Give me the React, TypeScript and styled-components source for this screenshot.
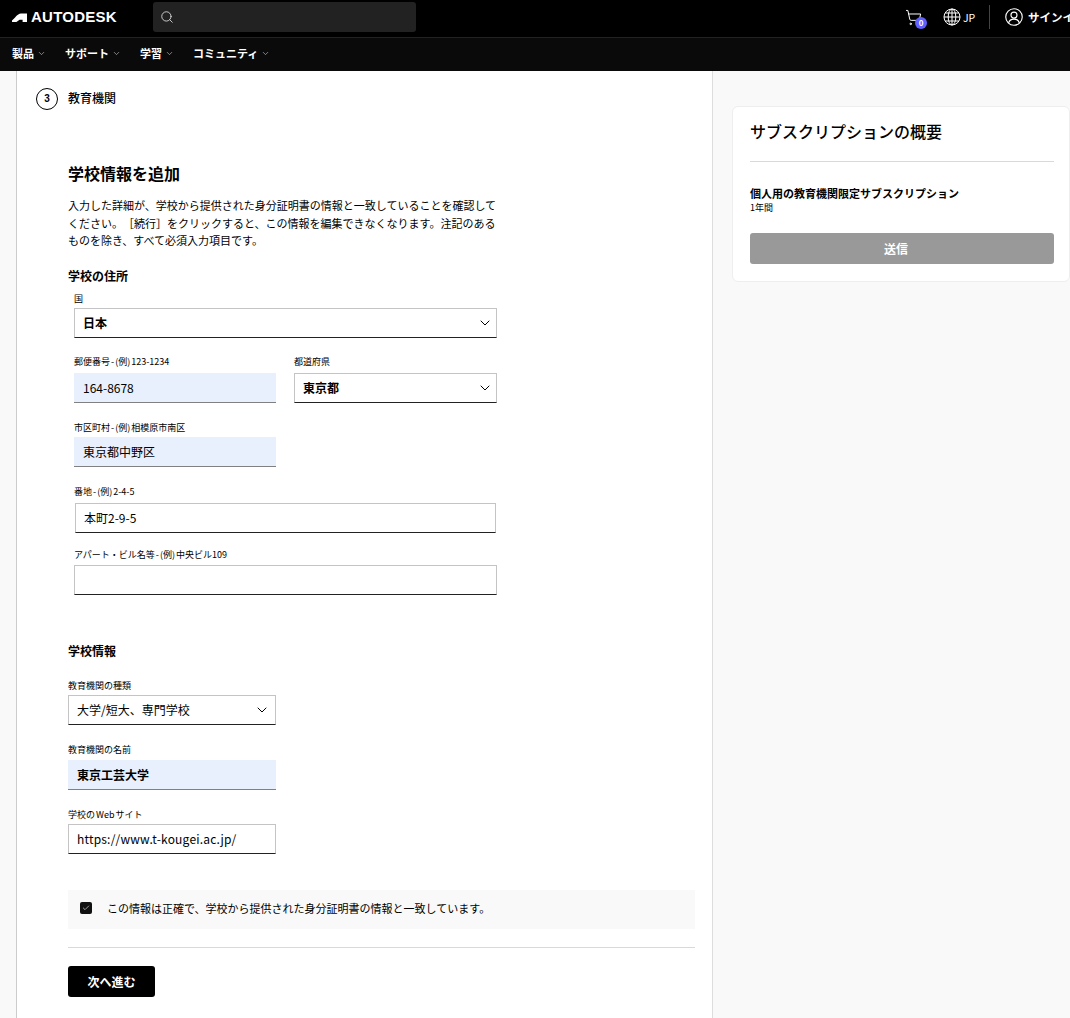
import { ShoppingCart, Search, ChevronDown, Check } from "lucide-react";
import styled, { createGlobalStyle } from "styled-components";

const GlobalStyle = createGlobalStyle`
    html, body {
        margin: 0;
        padding: 0;
        background: #f9f9f9;
        overflow: hidden;
    }
    body {
        font-family: "Noto Sans CJK JP", "Noto Sans", sans-serif;
        color: #000;
        text-spacing-trim: space-all;
    }
    * {
        box-sizing: border-box;
    }
`;

const Page = styled.div`
    width: 1070px;
    height: 1018px;
    overflow: hidden;
`;

const TopBar = styled.header`
    height: 38px;
    background: #000;
    border-bottom: 1px solid #222;
    display: flex;
    align-items: center;
    padding-left: 12px;
`;
const Logo = styled.div`
    width: 141px;
    margin-bottom: 3px;
    display: flex;
    align-items: center;
    gap: 4px;
    color: #fff;
    font-family: "Liberation Sans", sans-serif;
    font-weight: 700;
    font-size: 15px;
    line-height: 18px;
    letter-spacing: 0.25px;
`;
const SearchBox = styled.div`
    width: 263px;
    height: 30px;
    margin-bottom: 3px;
    background: #222;
    border-radius: 3px;
    display: flex;
    align-items: center;
    padding-left: 7px;
    color: #ddd;
`;
const TopRight = styled.div`
    width: 165px;
    margin-left: auto;
    margin-bottom: 3px;
    display: flex;
    align-items: center;
    color: #fff;
    white-space: nowrap;
    overflow: hidden;
`;
const Cart = styled.div`
    position: relative;
    flex-shrink: 0;
    width: 38px;
    height: 24px;
    display: flex;
    align-items: center;
`;
const Badge = styled.span`
    position: absolute;
    left: 10px;
    top: 12px;
    width: 12px;
    height: 12px;
    border-radius: 50%;
    background: #5f60ff;
    font-size: 8px;
    line-height: 12px;
    font-weight: 700;
    text-align: center;
`;
const Locale = styled.div`
    flex-shrink: 0;
    display: flex;
    align-items: center;
    gap: 2px;
    font-size: 10.5px;
    width: 46px;
`;
const Divider = styled.div`
    flex-shrink: 0;
    width: 1px;
    height: 24px;
    background: #444;
    margin-right: 15px;
`;
const SignIn = styled.div`
    flex-shrink: 0;
    display: flex;
    align-items: center;
    gap: 5px;
    font-size: 11.5px;
    font-weight: 700;
`;

const NavBar = styled.nav`
    height: 33px;
    padding: 0 0 3px 12px;
    background: #0a0a0a;
    display: flex;
    align-items: center;
`;
const NavItem = styled.div<{ $w: number }>`
    width: ${p => p.$w}px;
    display: flex;
    align-items: center;
    gap: 3px;
    color: #fff;
    font-size: 11px;
    font-weight: 700;
    svg {
        color: #bbb;
    }
`;

const Body = styled.div`
    display: flex;
    align-items: flex-start;
    padding-left: 16px;
`;
const Main = styled.main`
    width: 698px;
    height: 947px;
    background: #fff;
    border-left: 1px solid #ccc;
    border-right: 1px solid #ddd;
    padding-left: 51px;
`;
const StepRow = styled.div`
    display: flex;
    align-items: center;
    height: 22px;
    margin-top: 17px;
    margin-left: -32px;
    gap: 10px;
`;
const StepCircle = styled.span`
    width: 22px;
    height: 22px;
    border: 1.5px solid #000;
    border-radius: 50%;
    font-family: "Liberation Sans", sans-serif;
    font-size: 10px;
    font-weight: 700;
    line-height: 19px;
    text-align: center;
`;
const StepName = styled.span`
    margin-bottom: 4px;
    font-size: 12px;
    font-weight: 500;
`;
const Heading = styled.h2`
    margin: 51px 0 0;
    font-size: 16px;
    line-height: 24px;
    font-weight: 700;
`;
const Intro = styled.p`
    width: 430px;
    margin: 12px 0 0;
    font-size: 11px;
    line-height: 17.5px;
`;
const Section = styled.h3<{ $top: number }>`
    margin: ${p => p.$top}px 0 0;
    font-size: 12px;
    line-height: 18px;
    font-weight: 700;
`;
const Indent = styled.div`
    width: 429px;
    padding-left: 6px;
`;
const Row = styled.div`
    display: flex;
    gap: 18px;
`;
const Field = styled.div<{ $top: number; $w?: number }>`
    margin-top: ${p => p.$top}px;
    width: ${p => (p.$w ? `${p.$w}px` : "100%")};
`;
const Label = styled.label<{ $gap: number }>`
    display: block;
    height: 12px;
    margin-bottom: ${p => p.$gap}px;
    font-size: 9px;
    line-height: 12px;
    word-spacing: -1px;
    white-space: nowrap;
`;
const Control = styled.div<{
    $filled?: boolean;
    $bold?: boolean;
    $pad?: number;
    $right?: number;
    $inset?: boolean;
    $wide?: boolean;
}>`
    height: 30px;
    margin: 0 ${p => (p.$inset ? 1 : 0)}px;
    display: flex;
    align-items: center;
    justify-content: space-between;
    padding: 0 ${p => p.$right ?? 9}px 0 ${p => p.$pad ?? 8}px;
    background: ${p => (p.$filled ? "#e8f0fe" : "#fff")};
    border: ${p => (p.$filled ? "0 solid transparent" : "1px solid #c4c4c4")};
    border-bottom: 1px solid ${p => (p.$filled ? "#808080" : "#222")};
    font-size: 12px;
    font-weight: ${p => (p.$bold ? 700 : 400)};
    letter-spacing: ${p => (p.$wide ? "0.2px" : "0")};
`;
const Notice = styled.div`
    width: 627px;
    height: 39px;
    margin-top: 36px;
    padding: 0 0 3px 12px;
    background: #f9f9f9;
    display: flex;
    align-items: center;
    gap: 15px;
    font-size: 11px;
`;
const CheckBox = styled.span`
    width: 12px;
    height: 12px;
    border-radius: 2px;
    background: #111;
    color: #bbb;
    display: flex;
    align-items: center;
    justify-content: center;
`;
const Rule = styled.hr`
    width: 627px;
    margin: 18px 0 0;
    border: 0;
    border-top: 1px solid #d9d9d9;
`;
const NextButton = styled.button`
    display: block;
    width: 87px;
    height: 31px;
    margin-top: 18px;
    border: 0;
    border-radius: 3px;
    background: #000;
    color: #fff;
    font-family: inherit;
    font-size: 12px;
    font-weight: 700;
`;

const Summary = styled.aside`
    width: 338px;
    height: 176px;
    flex-shrink: 0;
    margin: 35px 0 0 19px;
    padding: 12px 17px 0;
    background: #fff;
    border: 1px solid #eee;
    border-radius: 6px;
`;
const SummaryTitle = styled.h2`
    margin: 0;
    width: 304px;
    height: 43px;
    border-bottom: 1px solid #d9d9d9;
    font-size: 16px;
    line-height: 24px;
    font-weight: 500;
`;
const PlanName = styled.div`
    margin-top: 22px;
    font-size: 11px;
    line-height: 18px;
    font-weight: 700;
`;
const PlanTerm = styled.div`
    font-size: 9px;
    line-height: 11px;
`;
const SendButton = styled.button`
    display: block;
    width: 304px;
    height: 31px;
    margin-top: 20px;
    padding: 0 12px 0 0;
    border: 0;
    border-radius: 3px;
    background: #999;
    color: #fff;
    font-family: inherit;
    font-size: 12px;
    font-weight: 700;
`;

const navItems = [
    { name: "製品", w: 53 },
    { name: "サポート", w: 75 },
    { name: "学習", w: 53 },
    { name: "コミュニティ", w: 100 },
];

function LogoMark() {
    return (
        <svg width="15" height="9" viewBox="0 0 15 9" fill="#fff">
            <path d="M0 9 V7.6 C3 5.5 5 1 9 .6 H15 V9 H10.6 V6.8 H7.6 L4.4 9 Z" />
        </svg>
    );
}

function GlobeIcon() {
    return (
        <svg width="18" height="18" viewBox="0 0 18 18" fill="none" stroke="#fff" strokeWidth="1">
            <circle cx="9" cy="9" r="8" />
            <ellipse cx="9" cy="9" rx="3.8" ry="8" />
            <path d="M9 1 V17 M1 9 H17 M2.2 5 H15.8 M2.2 13 H15.8" />
        </svg>
    );
}

function UserIcon() {
    return (
        <svg width="18" height="18" viewBox="0 0 19 19" fill="none" stroke="#fff" strokeWidth="1.2">
            <circle cx="9.5" cy="9.5" r="8.7" />
            <circle cx="9.5" cy="7.5" r="3.2" />
            <path d="M3.8 16 C4.5 12.8 7 11.8 9.5 11.8 C12 11.8 14.5 12.8 15.2 16" />
        </svg>
    );
}

function Chevron() {
    return <ChevronDown size={16} strokeWidth={1.5} />;
}

function App() {
    return (
        <Page>
            <GlobalStyle />
            <TopBar>
                <Logo>
                    <LogoMark />
                    AUTODESK
                </Logo>
                <SearchBox>
                    <Search size={14} strokeWidth={1.5} />
                </SearchBox>
                <TopRight>
                    <Cart>
                        <ShoppingCart size={17} strokeWidth={1.4} />
                        <Badge>0</Badge>
                    </Cart>
                    <Locale>
                        <GlobeIcon />
                        JP
                    </Locale>
                    <Divider />
                    <SignIn>
                        <UserIcon />
                        サインイン
                    </SignIn>
                </TopRight>
            </TopBar>
            <NavBar>
                {navItems.map(item => (
                    <NavItem key={item.name} $w={item.w}>
                        {item.name}
                        <ChevronDown size={9} strokeWidth={1.8} />
                    </NavItem>
                ))}
            </NavBar>
            <Body>
                <Main>
                    <StepRow>
                        <StepCircle>3</StepCircle>
                        <StepName>教育機関</StepName>
                    </StepRow>
                    <Heading>学校情報を追加</Heading>
                    <Intro>
                        入力した詳細が、学校から提供された身分証明書の情報と一致していることを確認してください。［続行］をクリックすると、この情報を編集できなくなります。注記のあるものを除き、すべて必須入力項目です。
                    </Intro>
                    <Section $top={17}>学校の住所</Section>
                    <Indent>
                        <Field $top={8}>
                            <Label $gap={3}>国</Label>
                            <Control $bold $right={3}>
                                日本
                                <Chevron />
                            </Control>
                        </Field>
                        <Row>
                            <Field $top={18} $w={202}>
                                <Label $gap={5}>郵便番号 - (例) 123-1234</Label>
                                <Control $filled $pad={9}>164-8678</Control>
                            </Field>
                            <Field $top={18} $w={203}>
                                <Label $gap={5}>都道府県</Label>
                                <Control $bold $right={3}>
                                    東京都
                                    <Chevron />
                                </Control>
                            </Field>
                        </Row>
                        <Field $top={19} $w={202}>
                            <Label $gap={3}>市区町村 - (例) 相模原市南区</Label>
                            <Control $filled $pad={9}>東京都中野区</Control>
                        </Field>
                        <Field $top={19}>
                            <Label $gap={5}>番地 - (例) 2-4-5</Label>
                            <Control $inset>本町2-9-5</Control>
                        </Field>
                        <Field $top={16}>
                            <Label $gap={4}>アパート・ビル名等 - (例) 中央ビル109</Label>
                            <Control />
                        </Field>
                    </Indent>
                    <Section $top={47}>学校情報</Section>
                    <Field $top={20} $w={208}>
                        <Label $gap={3}>教育機関の種類</Label>
                        <Control $right={5}>
                            大学/短大、専門学校
                            <Chevron />
                        </Control>
                    </Field>
                    <Field $top={19} $w={208}>
                        <Label $gap={4}>教育機関の名前</Label>
                        <Control $filled $bold $pad={9}>東京工芸大学</Control>
                    </Field>
                    <Field $top={19} $w={208}>
                        <Label $gap={3}>学校の Web サイト</Label>
                        <Control $wide>https://www.t-kougei.ac.jp/</Control>
                    </Field>
                    <Notice>
                        <CheckBox>
                            <Check size={8} strokeWidth={2.5} />
                        </CheckBox>
                        この情報は正確で、学校から提供された身分証明書の情報と一致しています。
                    </Notice>
                    <Rule />
                    <NextButton>次へ進む</NextButton>
                </Main>
                <Summary>
                    <SummaryTitle>サブスクリプションの概要</SummaryTitle>
                    <PlanName>個人用の教育機関限定サブスクリプション</PlanName>
                    <PlanTerm>1年間</PlanTerm>
                    <SendButton>送信</SendButton>
                </Summary>
            </Body>
        </Page>
    );
}

export default App;
